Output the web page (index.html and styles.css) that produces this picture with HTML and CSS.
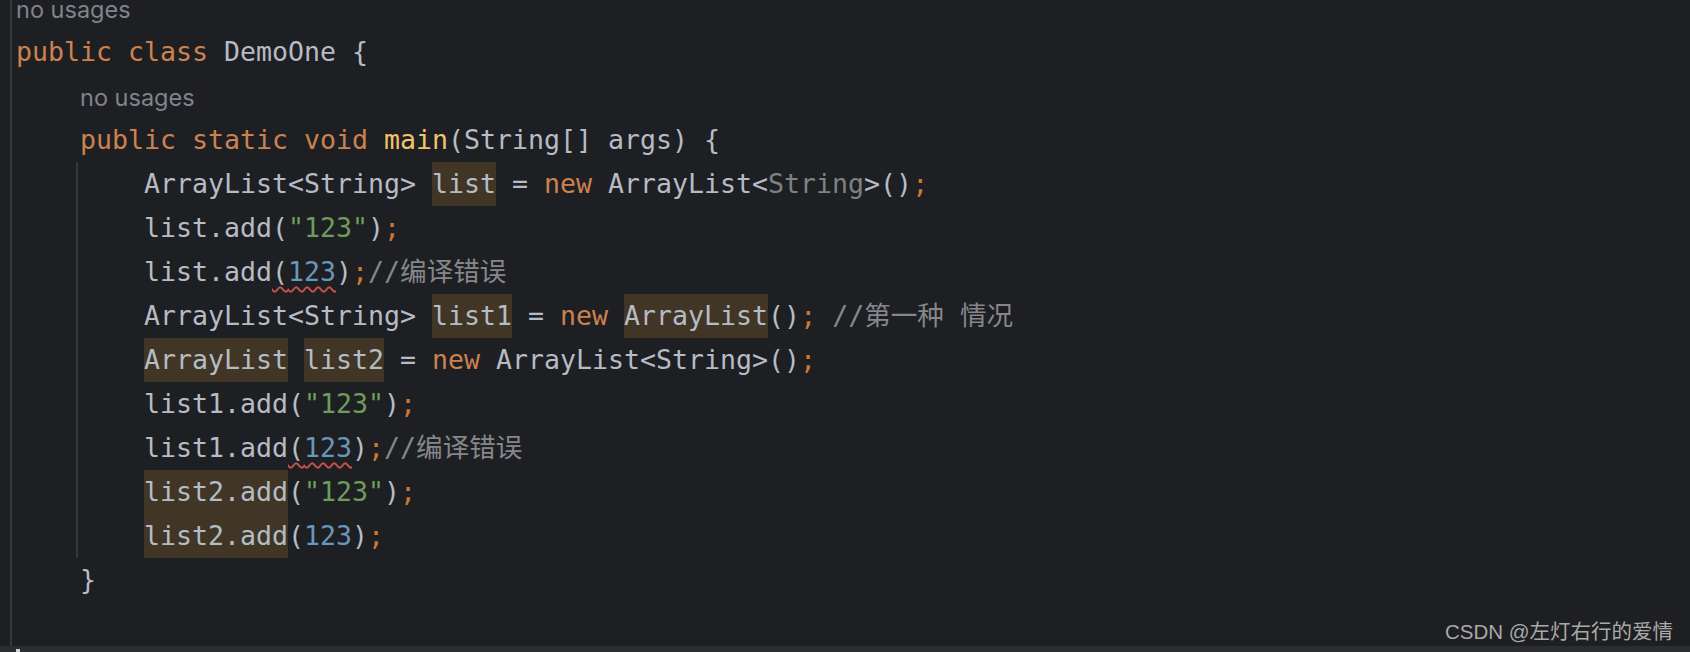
FILE: index.html
```html
<!DOCTYPE html>
<html lang="zh-CN">
<head>
<meta charset="utf-8">
<title>DemoOne</title>
<link rel="stylesheet" href="styles.css">
</head>
<body>
<div class="page">
  <div class="editor">
    <div class="code">
      <div class="line hint top">no usages</div>
      <div class="line"><span class="kw">public class</span> DemoOne {</div>
      <div class="line hint lvl1">no usages</div>
      <div class="line">    <span class="kw">public static void</span> <span class="fn">main</span>(String[] args) {</div>
      <div class="body">
        <div class="line">ArrayList&lt;String&gt; <span class="hl">list</span> = <span class="kw">new</span> ArrayList&lt;<span class="dim">String</span>&gt;()<span class="semi">;</span></div>
        <div class="line">list.add(<span class="str">"123"</span>)<span class="semi">;</span></div>
        <div class="line">list.add<span class="err">(<span class="num">123</span></span>)<span class="semi">;</span><span class="cmt">//编译错误</span></div>
        <div class="line">ArrayList&lt;String&gt; <span class="hl">list1</span> = <span class="kw">new</span> <span class="hl">ArrayList</span>()<span class="semi">;</span> <span class="cmt">//第一种 情况</span></div>
        <div class="line"><span class="hl">ArrayList</span> <span class="hl">list2</span> = <span class="kw">new</span> ArrayList&lt;String&gt;()<span class="semi">;</span></div>
        <div class="line">list1.add(<span class="str">"123"</span>)<span class="semi">;</span></div>
        <div class="line">list1.add<span class="err">(<span class="num">123</span></span>)<span class="semi">;</span><span class="cmt">//编译错误</span></div>
        <div class="line"><span class="hl">list2.add</span>(<span class="str">"123"</span>)<span class="semi">;</span></div>
        <div class="line"><span class="hl">list2.add</span>(<span class="num">123</span>)<span class="semi">;</span></div>
      </div>
      <div class="line">    }</div>
      <div class="line"> </div>
    </div>
  </div>
  <div class="hscroll"><span class="thumb"></span></div>
  <div class="watermark">CSDN @左灯右行的爱情</div>
</div>
</body>
</html>
```

FILE: styles.css
```css
html, body {
  margin: 0;
  padding: 0;
  background: #1e1f22;
}

.page {
  position: relative;
  width: 1690px;
  height: 652px;
  overflow: hidden;
  background: #1e1f22;
  display: flex;
  flex-direction: column;
}

.editor {
  height: 646px;
  overflow: hidden;
  flex: none;
}

.code {
  margin-top: -14px;
  margin-left: 10px;
  height: 680px;
  border-left: 2px solid #35373b;
  padding-left: 4px;
  font-family: "DejaVu Sans Mono", "Noto Sans CJK SC", monospace;
  font-size: 26.58px;
  color: #b4bcc6;
}

.line {
  height: 44px;
  line-height: 44px;
  white-space: pre;
}

.hint {
  font-family: Inter, "Noto Sans", sans-serif;
  font-size: 23.5px;
  color: #80848b;
}

.hint.top {
  padding-top: 2px;
  height: 42px;
}

.hint.lvl1 {
  padding-left: 64px;
  padding-top: 2px;
  height: 42px;
}

.body {
  margin-left: 60px;
  border-left: 2px solid #35373b;
  padding-left: 66px;
}

.kw { color: #cc8250; }
.semi { color: #cc7832; }
.fn { color: #f2c26e; }
.str { color: #6e9c5e; }
.num { color: #6897bb; }
.dim { color: #7e8187; }
.cmt {
  color: #85878b;
  font-family: "DejaVu Sans Mono", "Noto Sans CJK SC", monospace;
}

.hl {
  display: inline-block;
  height: 44px;
  vertical-align: top;
  background: #413625;
}

.err {
  text-decoration: underline wavy #c9504c;
  text-decoration-thickness: 1.5px;
  text-underline-offset: 5px;
}

.hscroll {
  height: 6px;
  background: #2b2d30;
  position: relative;
  flex: none;
}

.thumb {
  position: absolute;
  left: 16px;
  bottom: 0;
  width: 4px;
  height: 3px;
  background: #d0d0d0;
}

.watermark {
  position: absolute;
  right: 17px;
  top: 621px;
  font-family: "Liberation Sans", "Noto Sans CJK SC", sans-serif;
  font-size: 20.5px;
  line-height: 22px;
  color: #a9a9a9;
  white-space: nowrap;
}
```
